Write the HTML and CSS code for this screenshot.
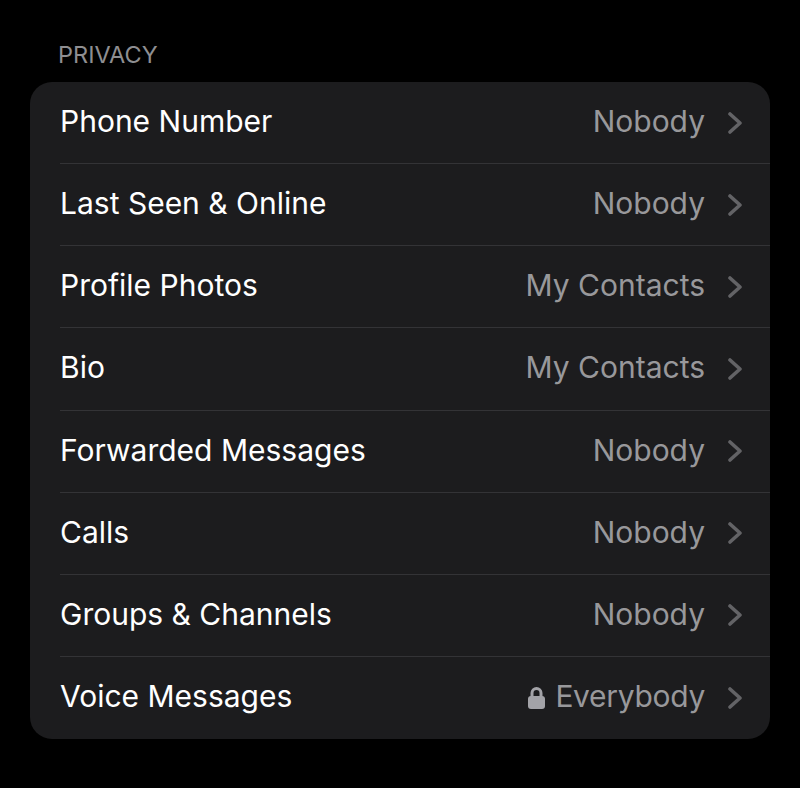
FILE: index.html
```html
<!DOCTYPE html>
<html lang="en">
<head>
<meta charset="utf-8">
<title>Privacy</title>
<link rel="stylesheet" href="styles.css">
</head>
<body>
<h2 class="section-title">PRIVACY</h2>
<ul class="list">
<li class="row"><span class="label">Phone Number</span><span class="value">Nobody</span><svg class="chev" viewBox="0 0 14 22"><path d="M2 2 L12 11 L2 20"/></svg></li>
<li class="row"><span class="label">Last Seen &amp; Online</span><span class="value">Nobody</span><svg class="chev" viewBox="0 0 14 22"><path d="M2 2 L12 11 L2 20"/></svg></li>
<li class="row"><span class="label">Profile Photos</span><span class="value">My Contacts</span><svg class="chev" viewBox="0 0 14 22"><path d="M2 2 L12 11 L2 20"/></svg></li>
<li class="row"><span class="label">Bio</span><span class="value">My Contacts</span><svg class="chev" viewBox="0 0 14 22"><path d="M2 2 L12 11 L2 20"/></svg></li>
<li class="row"><span class="label">Forwarded Messages</span><span class="value">Nobody</span><svg class="chev" viewBox="0 0 14 22"><path d="M2 2 L12 11 L2 20"/></svg></li>
<li class="row"><span class="label">Calls</span><span class="value">Nobody</span><svg class="chev" viewBox="0 0 14 22"><path d="M2 2 L12 11 L2 20"/></svg></li>
<li class="row"><span class="label">Groups &amp; Channels</span><span class="value">Nobody</span><svg class="chev" viewBox="0 0 14 22"><path d="M2 2 L12 11 L2 20"/></svg></li>
<li class="row"><span class="label">Voice Messages</span><svg class="lock" viewBox="0 0 17 22"><path class="shackle" d="M4 11 V6 a4.5 4.5 0 0 1 9 0 V11"/><rect class="lock-body" x="0" y="9" width="17" height="13" rx="3"/></svg><span class="value value-tight">Everybody</span><svg class="chev" viewBox="0 0 14 22"><path d="M2 2 L12 11 L2 20"/></svg></li>
</ul>
</body>
</html>
```
FILE: styles.css
```css
html, body { margin: 0; padding: 0; background: #000; }
body {
  width: 800px;
  height: 788px;
  overflow: hidden;
  font-family: Inter, "Liberation Sans", sans-serif;
}
.section-title {
  margin: 0;
  padding: 42px 0 0 58px;
  height: 82px;
  box-sizing: border-box;
  font-size: 23.5px;
  line-height: 26px;
  font-weight: 400;
  color: #8e8e91;
}
.list {
  list-style: none;
  margin: 0 30px;
  padding: 0;
  background: #1c1c1e;
  border-radius: 22px;
  overflow: hidden;
}
.row {
  display: flex;
  align-items: center;
  height: 82.125px;
  margin-left: 30px;
  padding-right: 28px;
  box-sizing: border-box;
  border-bottom: 1px solid #333336;
  font-size: 30px;
  font-weight: 400;
}
.row:last-child { border-bottom: 0; }
.label { color: #fff; margin-right: auto; padding-bottom: 3px; }
.value { color: #98989b; padding-bottom: 3px; }
.value-tight { letter-spacing: -0.3px; }
.lock { width: 17px; height: 22px; margin-right: 10px; }
.shackle { fill: none; stroke: #a3a3a8; stroke-width: 3; }
.lock-body { fill: #a3a3a8; }
.chev { width: 14px; height: 22px; margin-left: 23px; }
.chev path { fill: none; stroke: #636366; stroke-width: 3.6; stroke-linecap: round; stroke-linejoin: round; }
```
